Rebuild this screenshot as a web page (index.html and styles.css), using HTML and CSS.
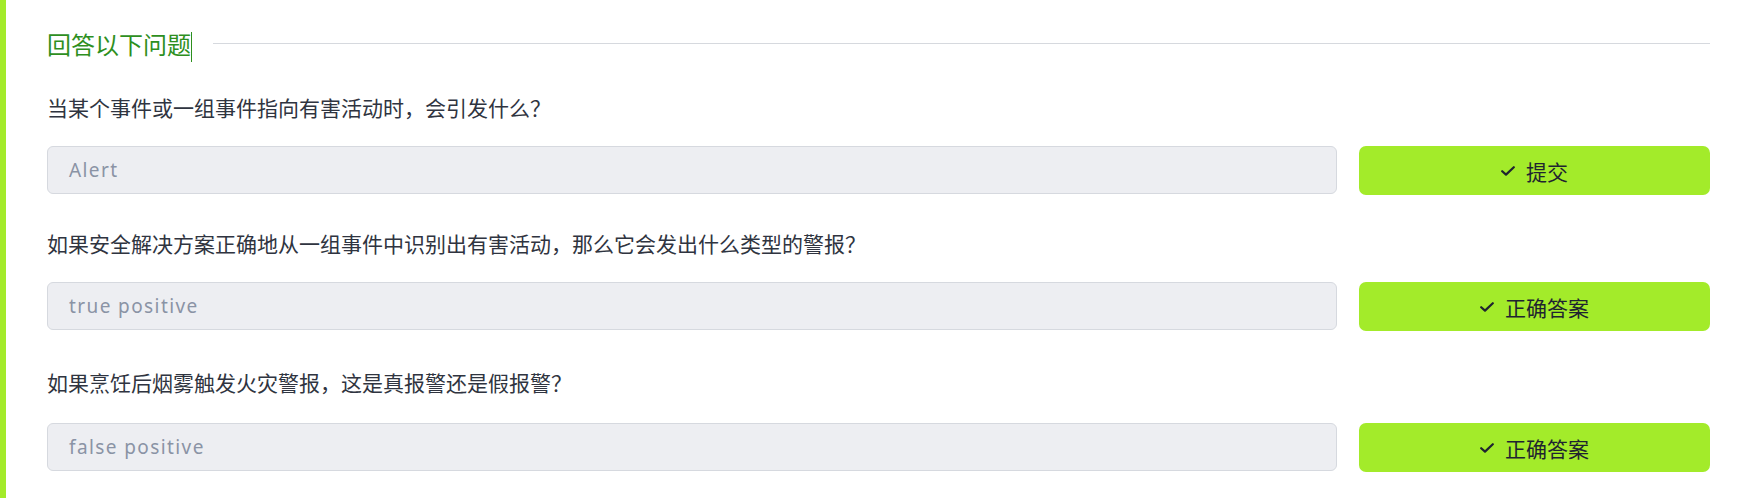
FILE: index.html
```html
<!DOCTYPE html>
<html lang="zh">
<head>
<meta charset="utf-8">
<link rel="stylesheet" href="styles.css">
</head>
<body>
<section class="task">
  <div class="task-head">
    <h2 class="task-title">回答以下问题</h2>
    <span class="caret"></span>
    <span class="divider"></span>
  </div>

  <div class="qa">
    <p class="question">当某个事件或一组事件指向有害活动时，会引发什么？</p>
    <div class="answer-row">
      <div class="answer-input">Alert</div>
      <button class="answer-btn"><svg class="check" viewBox="0 0 14 10" width="14" height="10"><path d="M1.2 5.2 L5 8.6 L12.8 1.2" fill="none" stroke="#1f2430" stroke-width="2.2" stroke-linecap="round" stroke-linejoin="round"/></svg><span>提交</span></button>
    </div>
  </div>

  <div class="qa">
    <p class="question">如果安全解决方案正确地从一组事件中识别出有害活动，那么它会发出什么类型的警报？</p>
    <div class="answer-row">
      <div class="answer-input">true positive</div>
      <button class="answer-btn"><svg class="check" viewBox="0 0 14 10" width="14" height="10"><path d="M1.2 5.2 L5 8.6 L12.8 1.2" fill="none" stroke="#1f2430" stroke-width="2.2" stroke-linecap="round" stroke-linejoin="round"/></svg><span>正确答案</span></button>
    </div>
  </div>

  <div class="qa">
    <p class="question">如果烹饪后烟雾触发火灾警报，这是真报警还是假报警？</p>
    <div class="answer-row">
      <div class="answer-input">false positive</div>
      <button class="answer-btn"><svg class="check" viewBox="0 0 14 10" width="14" height="10"><path d="M1.2 5.2 L5 8.6 L12.8 1.2" fill="none" stroke="#1f2430" stroke-width="2.2" stroke-linecap="round" stroke-linejoin="round"/></svg><span>正确答案</span></button>
    </div>
  </div>
</section>
</body>
</html>
```

FILE: styles.css
```css
html, body {
  margin: 0;
  padding: 0;
  background: #ffffff;
}

body {
  font-family: "Noto Sans", "Noto Sans CJK SC", sans-serif;
  color: #2d3340;
}

.task {
  border-left: 6px solid #a3eb2a;
  padding: 26px 36px 30px 41px;
  min-height: 498px;
  box-sizing: border-box;
}

.task-head {
  display: flex;
  align-items: center;
  height: 36px;
}

.task-title {
  margin: 0;
  font-family: "Noto Sans CJK SC", sans-serif;
  font-size: 24px;
  font-weight: 400;
  line-height: 36px;
  color: #2e8f1e;
}

.caret {
  width: 1px;
  height: 30px;
  background: #2e8f1e;
  margin-top: 6px;
}

.divider {
  flex: 1;
  height: 1px;
  background: #d6d9de;
  margin-left: 21px;
  margin-top: -2px;
}

.qa {
  display: flex;
  flex-direction: column;
}

.question {
  margin: 30px 0 0;
  font-family: "Noto Sans CJK SC", sans-serif;
  font-size: 21px;
  line-height: 30px;
  color: #2f3440;
}

.qa + .qa .question {
  margin-top: 33px;
}

.qa:last-child .question {
  margin-top: 36px;
}

.qa:last-child .answer-row {
  margin-top: 26px;
}

.answer-row {
  display: flex;
  gap: 22px;
  margin-top: 24px;
}

.answer-input {
  flex: 1;
  height: 48px;
  box-sizing: border-box;
  background: #edeef2;
  border: 1px solid #d6d9df;
  border-radius: 6px;
  padding: 0 21px;
  display: flex;
  align-items: center;
  font-family: "Noto Sans", sans-serif;
  font-size: 19px;
  letter-spacing: 1.4px;
  color: #8a93a5;
}

.answer-btn {
  width: 351px;
  height: 49px;
  border: none;
  border-radius: 7px;
  background: #a3eb2a;
  display: flex;
  align-items: center;
  justify-content: center;
  gap: 11px;
  font-family: "Noto Sans CJK SC", sans-serif;
  font-size: 21px;
  color: #1f2430;
  padding: 0;
  cursor: pointer;
}

.check {
  display: block;
}
```
